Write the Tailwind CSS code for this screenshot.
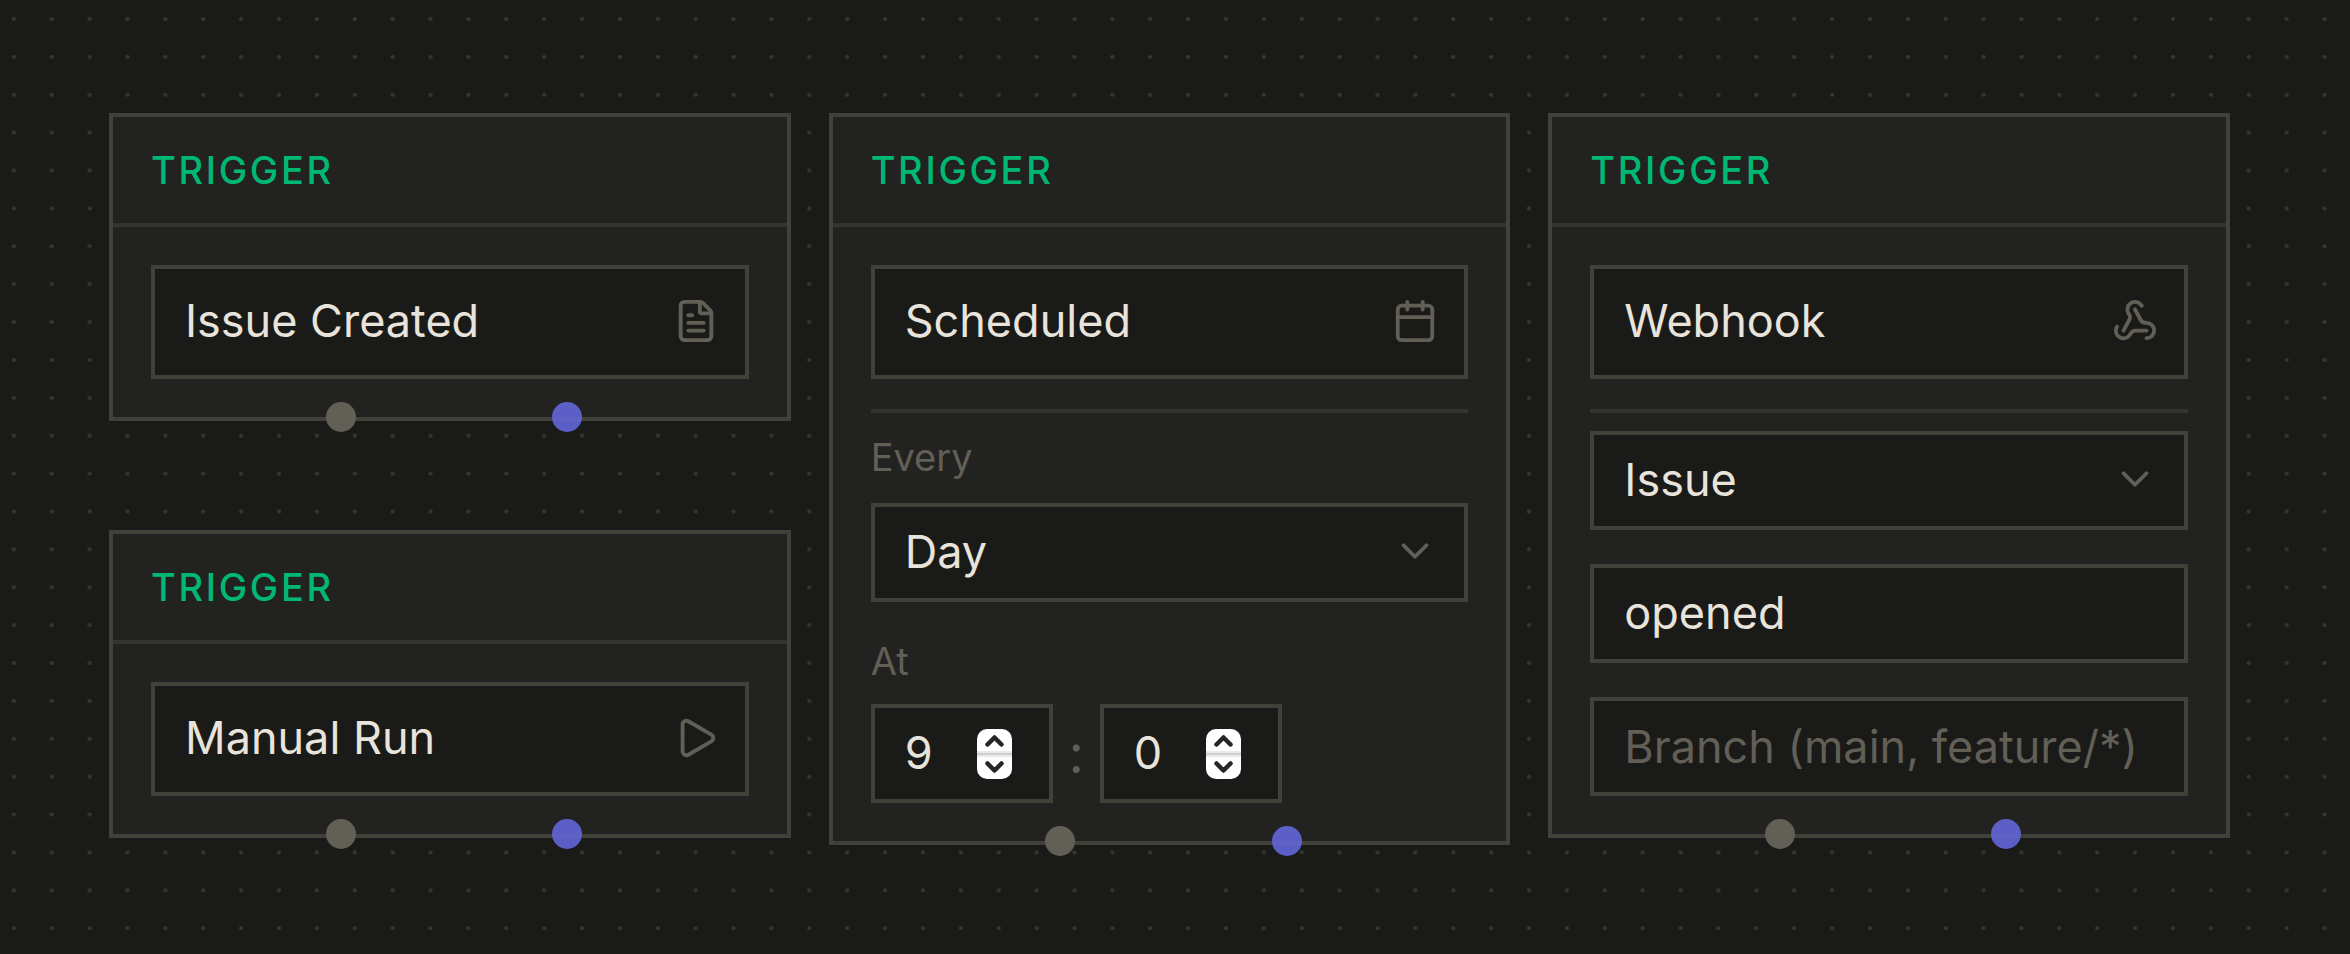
<!DOCTYPE html>
<html lang="en">

<head>
    <meta charset="UTF-8" />
    <meta name="viewport" content="width=device-width, initial-scale=1.0" />
    <title>Workflow Triggers</title>
    <script src="https://cdn.jsdelivr.net/npm/@tailwindcss/browser@4"></script>
</head>

<body class="relative min-h-screen bg-[#1a1a18] font-['Inter',sans-serif] text-[45px] leading-[54px] text-[#e8e4dc]">
    <!-- Dotted canvas -->
    <svg class="absolute inset-0 -z-10 h-full w-full" aria-hidden="true">
        <defs>
            <pattern id="dots" x="-5.1" y="0.1" width="37.88" height="37.88" patternUnits="userSpaceOnUse">
                <circle cx="18.94" cy="18.94" r="2.1" fill="#363634" />
            </pattern>
        </defs>
        <rect width="100%" height="100%" fill="url(#dots)" />
    </svg>

    <main class="grid grid-cols-3 items-start gap-[38px] pt-[113px] pr-[120px] pb-[100px] pl-[109px]">
        <div class="flex flex-col gap-[109px]">
            <section class="relative border-4 border-[#41413a] bg-[#222220]">
                <h2 class="border-b-4 border-[#333330] px-[38px] py-[29px] text-[38px] leading-[48px] font-medium tracking-[0.07em] text-[#00b873]">TRIGGER</h2>
                <div class="p-[38px]">
                    <button type="button" class="flex h-[114px] w-full items-center justify-between border-4 border-[#41413a] bg-[#1a1a18] pr-[26px] pb-[2px] pl-[30px] text-left">
                        Issue Created
                        <svg class="size-[46px] text-[#625f56]" viewBox="0 0 24 24" fill="none" stroke="currentColor" stroke-width="2" stroke-linecap="round" stroke-linejoin="round">
                            <path d="M6 22a2 2 0 0 1-2-2V4a2 2 0 0 1 2-2h8a2.4 2.4 0 0 1 1.704.706l3.588 3.588A2.4 2.4 0 0 1 20 8v12a2 2 0 0 1-2 2z" />
                            <path d="M14 2v5a1 1 0 0 0 1 1h5" />
                            <path d="M10 9H8" />
                            <path d="M16 13H8" />
                            <path d="M16 17H8" />
                        </svg>
                    </button>
                </div>
                <span class="absolute -bottom-[15px] left-1/3 ml-[3px] size-[30px] -translate-x-1/2 rounded-full bg-[#625f56]"></span>
                <span class="absolute -bottom-[15px] left-2/3 ml-[5px] size-[30px] -translate-x-1/2 rounded-full bg-[#6367d8]/90"></span>
            </section>

            <section class="relative border-4 border-[#41413a] bg-[#222220]">
                <h2 class="border-b-4 border-[#333330] px-[38px] py-[29px] text-[38px] leading-[48px] font-medium tracking-[0.07em] text-[#00b873]">TRIGGER</h2>
                <div class="p-[38px]">
                    <button type="button" class="flex h-[114px] w-full items-center justify-between border-4 border-[#41413a] bg-[#1a1a18] pr-[26px] pb-[2px] pl-[30px] text-left">
                        Manual Run
                        <svg class="size-[46px] text-[#625f56]" viewBox="0 0 24 24" fill="none" stroke="currentColor" stroke-width="2" stroke-linecap="round" stroke-linejoin="round">
                            <path d="M5 5a2 2 0 0 1 3.008-1.728l11.997 6.998a2 2 0 0 1 .003 3.458l-12 7A2 2 0 0 1 5 19z" />
                        </svg>
                    </button>
                </div>
                <span class="absolute -bottom-[15px] left-1/3 ml-[3px] size-[30px] -translate-x-1/2 rounded-full bg-[#625f56]"></span>
                <span class="absolute -bottom-[15px] left-2/3 ml-[5px] size-[30px] -translate-x-1/2 rounded-full bg-[#6367d8]/90"></span>
            </section>
        </div>

        <section class="relative border-4 border-[#41413a] bg-[#222220]">
            <h2 class="border-b-4 border-[#333330] px-[38px] py-[29px] text-[38px] leading-[48px] font-medium tracking-[0.07em] text-[#00b873]">TRIGGER</h2>
            <div class="p-[38px]">
                <button type="button" class="flex h-[114px] w-full items-center justify-between border-4 border-[#41413a] bg-[#1a1a18] pr-[26px] pb-[2px] pl-[30px] text-left">
                    Scheduled
                    <svg class="size-[46px] text-[#625f56]" viewBox="0 0 24 24" fill="none" stroke="currentColor" stroke-width="2" stroke-linecap="round" stroke-linejoin="round">
                        <path d="M8 2v4" />
                        <path d="M16 2v4" />
                        <rect width="18" height="18" x="3" y="4" rx="2" />
                        <path d="M3 10h18" />
                    </svg>
                </button>
                <div class="mt-[30px] border-t-4 border-[#333330] pt-[20px]">
                    <label for="every" class="block text-[38px] leading-[48px] text-[#625f56]">Every</label>
                    <div class="relative mt-[22px]">
                        <select id="every" class="block h-[99px] w-full appearance-none border-4 border-[#41413a] bg-[#1a1a18] px-[30px] pb-[2px]">
                            <option>Day</option>
                        </select>
                        <svg class="pointer-events-none absolute top-[25px] right-[30px] size-[46px] text-[#625f56]" viewBox="0 0 24 24" fill="none" stroke="currentColor" stroke-width="2" stroke-linecap="round" stroke-linejoin="round">
                            <path d="m6 9 6 6 6-6" />
                        </svg>
                    </div>
                    <label for="hour" class="mt-[35px] block text-[38px] leading-[48px] text-[#625f56]">At</label>
                    <div class="mt-[19px] flex items-center">
                        <div class="relative">
                            <input id="hour" type="number" value="9" class="block h-[99px] w-[182px] [appearance:textfield] border-4 border-[#41413a] bg-[#1a1a18] pb-[2px] pl-[30px]" />
                            <svg class="pointer-events-none absolute inset-y-0 right-[41px] my-auto h-[50px] w-[35px]" viewBox="0 0 35 50" fill="none">
                                <rect width="35" height="50" rx="10" fill="#fff" />
                                <path d="M0 22h35v2H0zM0 26h35v2H0z" fill="#e9e9e9" />
                                <path d="M0 24h35v2H0z" fill="#cfcfcf" />
                                <path d="m10.500 15.500 7-7 7 7M10.500 34.500l7 7 7-7" stroke="#262626" stroke-width="4.500" stroke-linecap="round" stroke-linejoin="round" />
                            </svg>
                        </div>
                        <span class="w-[47px] text-center text-[54px] text-[#625f56]">:</span>
                        <div class="relative">
                            <input id="minute" type="number" value="0" aria-label="Minute" class="block h-[99px] w-[182px] [appearance:textfield] border-4 border-[#41413a] bg-[#1a1a18] pb-[2px] pl-[30px]" />
                            <svg class="pointer-events-none absolute inset-y-0 right-[41px] my-auto h-[50px] w-[35px]" viewBox="0 0 35 50" fill="none">
                                <rect width="35" height="50" rx="10" fill="#fff" />
                                <path d="M0 22h35v2H0zM0 26h35v2H0z" fill="#e9e9e9" />
                                <path d="M0 24h35v2H0z" fill="#cfcfcf" />
                                <path d="m10.500 15.500 7-7 7 7M10.500 34.500l7 7 7-7" stroke="#262626" stroke-width="4.500" stroke-linecap="round" stroke-linejoin="round" />
                            </svg>
                        </div>
                    </div>
                </div>
            </div>
            <span class="absolute -bottom-[15px] left-1/3 ml-[3px] size-[30px] -translate-x-1/2 rounded-full bg-[#625f56]"></span>
            <span class="absolute -bottom-[15px] left-2/3 ml-[5px] size-[30px] -translate-x-1/2 rounded-full bg-[#6367d8]/90"></span>
        </section>

        <section class="relative border-4 border-[#41413a] bg-[#222220]">
            <h2 class="border-b-4 border-[#333330] px-[38px] py-[29px] text-[38px] leading-[48px] font-medium tracking-[0.07em] text-[#00b873]">TRIGGER</h2>
            <div class="p-[38px]">
                <button type="button" class="flex h-[114px] w-full items-center justify-between border-4 border-[#41413a] bg-[#1a1a18] pr-[26px] pb-[2px] pl-[30px] text-left">
                    Webhook
                    <svg class="size-[46px] text-[#625f56]" viewBox="0 0 24 24" fill="none" stroke="currentColor" stroke-width="2" stroke-linecap="round" stroke-linejoin="round">
                        <path d="M18 16.980h-5.990c-1.100 0-1.950.94-2.480 1.900A4 4 0 0 1 2 17c.01-.7.2-1.400.57-2" />
                        <path d="m6 17 3.130-5.780c.53-.97.1-2.180-.5-3.100a4 4 0 1 1 6.890-4.060" />
                        <path d="m12 6 3.130 5.730C15.660 12.700 16.900 13 18 13a4 4 0 0 1 0 8" />
                    </svg>
                </button>
                <div class="mt-[30px] flex flex-col gap-[34px] border-t-4 border-[#333330] pt-[18px]">
                    <div class="relative">
                        <select aria-label="Event" class="block h-[99px] w-full appearance-none border-4 border-[#41413a] bg-[#1a1a18] px-[30px] pb-[2px]">
                            <option>Issue</option>
                        </select>
                        <svg class="pointer-events-none absolute top-[25px] right-[30px] size-[46px] text-[#625f56]" viewBox="0 0 24 24" fill="none" stroke="currentColor" stroke-width="2" stroke-linecap="round" stroke-linejoin="round">
                            <path d="m6 9 6 6 6-6" />
                        </svg>
                    </div>
                    <input type="text" value="opened" aria-label="Action" class="block h-[99px] w-full border-4 border-[#41413a] bg-[#1a1a18] px-[30px] pb-[2px]" />
                    <input type="text" placeholder="Branch (main, feature/*)" aria-label="Branch" class="block h-[99px] w-full border-4 border-[#41413a] bg-[#1a1a18] px-[30px] placeholder:text-[#625f56]" />
                </div>
            </div>
            <span class="absolute -bottom-[15px] left-1/3 ml-[3px] size-[30px] -translate-x-1/2 rounded-full bg-[#625f56]"></span>
            <span class="absolute -bottom-[15px] left-2/3 ml-[5px] size-[30px] -translate-x-1/2 rounded-full bg-[#6367d8]/90"></span>
        </section>
    </main>
</body>

</html>
